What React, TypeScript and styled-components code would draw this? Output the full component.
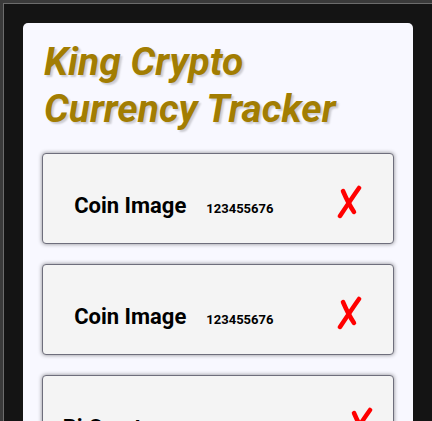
import React from "react";
import styled, { createGlobalStyle } from "styled-components";

const GlobalStyle = createGlobalStyle`
	* {
		box-sizing: border-box;
	}
	body {
		margin: 0;
		background: #3a3a3a;
		font-family: Roboto, "Liberation Sans", sans-serif;
	}
`;

const Frame = styled.div`
	margin: 3px 0 0 3px;
	border-top: 1px solid #6c6c6c;
	border-left: 1px solid #6c6c6c;
	background: #141414;
	padding: 19px 19px 19px 19px;
	min-height: 420px;
`;

const Panel = styled.div`
	background: ghostwhite;
	border-radius: 5px;
	padding: 18px 19px 19px 19px;
	display: flex;
	flex-direction: column;
	gap: 20px;
`;

const Title = styled.h1`
	margin: -2px 0 0 2px;
	font-size: 39px;
	line-height: 47px;
	font-style: italic;
	font-weight: 700;
	color: #a27d02;
	text-shadow: 2px 2px 2px rgba(0, 0, 0, 0.18);
`;

const CoinCard = styled.div`
	height: 91px;
	padding-top: 14px;
	background: #f4f4f4;
	border: 1px solid #6e6e7c;
	border-radius: 4px;
	box-shadow: 0 0 4px rgba(0, 0, 0, 0.45);
	display: flex;
	align-items: center;
	justify-content: space-around;
`;

const CoinInfo = styled.div`
	display: flex;
	align-items: baseline;
	gap: 20px;
`;

const CoinName = styled.span`
	font-size: 22px;
	font-weight: 700;
	color: #000;
`;

const CoinPrice = styled.span`
	font-size: 13px;
	font-weight: 700;
	color: #000;
`;

const RemoveButton = styled.button`
	border: none;
	background: none;
	padding: 0;
	margin-top: -8px;
	cursor: pointer;
	display: flex;
`;

const CrossIcon = () => (
	<svg width="26" height="34" viewBox="0 0 26 34">
		<path
			d="M23 3 C18 10 12 19 4 31"
			stroke="#ff0000"
			strokeWidth="4.5"
			strokeLinecap="round"
			fill="none"
		/>
		<path
			d="M7 6 C10 13 14 21 18 27"
			stroke="#ff0000"
			strokeWidth="4.5"
			strokeLinecap="round"
			fill="none"
		/>
	</svg>
);

interface Coin {
	name: string;
	price: string;
}

const coins: Coin[] = [
	{ name: "Coin Image", price: "123455676" },
	{ name: "Coin Image", price: "123455676" },
	{ name: "Bi Cryptomoney", price: "123455676" },
];

const App: React.FC = () => {
	return (
		<>
			<GlobalStyle />
			<Frame>
				<Panel>
					<Title>King Crypto Currency Tracker</Title>
					{coins.map((coin, i) => (
						<CoinCard key={i}>
							<CoinInfo>
								<CoinName>{coin.name}</CoinName>
								<CoinPrice>{coin.price}</CoinPrice>
							</CoinInfo>
							<RemoveButton aria-label="remove">
								<CrossIcon />
							</RemoveButton>
						</CoinCard>
					))}
				</Panel>
			</Frame>
		</>
	);
};

export default App;
